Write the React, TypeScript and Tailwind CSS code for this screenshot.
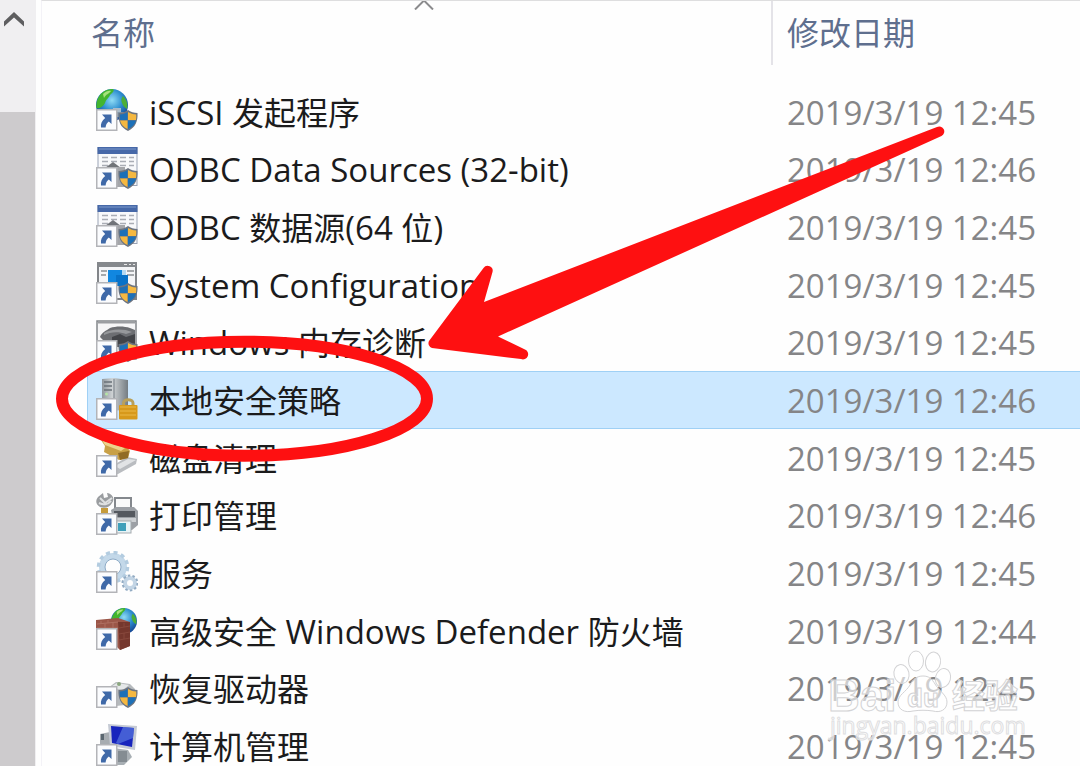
import type { ReactNode } from 'react'

function ShortcutArrow() {
  return (
    <g>
      <rect x="0.75" y="20.75" width="20" height="20.5" fill="#fbfcfe" stroke="#b3b4b8" strokeWidth="1.5" />
      <path d="M6 25.5H15.5V35L12.8 32.6C10.8 34.2 9.8 36 9.6 38.5H5C4.4 34.6 6 31.4 9.2 29Z" fill="#3f69a8" />
    </g>
  )
}

function Shield() {
  return (
    <g>
      <path d="M32 21C34.5 23 38 24 41.5 24C42 32 39.5 38.5 32 42C24.5 38.5 22 32 22.5 24C26 24 29.5 23 32 21Z" fill="#6d7480" />
      <path d="M31.5 23V31H24C23.7 29 23.7 27.5 23.8 25.5C27 25.3 29.5 24.5 31.5 23Z" fill="#1d70b7" />
      <path d="M32 23C34.5 24.5 37 25.3 40.2 25.5C40.3 27.5 40.3 29 40 31H32Z" fill="#f5b840" />
      <path d="M24 31.5H31.5V40C27.5 38 25 35.5 24 31.5Z" fill="#f5b840" />
      <path d="M32 31.5H40C39 35.5 36.5 38 32 40Z" fill="#1d70b7" />
    </g>
  )
}

function FileIcon({ children, shield }: { children: ReactNode; shield?: boolean }) {
  return (
    <svg viewBox="0 0 42 42" className="mb-[3px] h-[42px] w-[42px] shrink-0" aria-hidden="true">
      {children}
      {shield && <Shield />}
      <ShortcutArrow />
    </svg>
  )
}

function Globe({ cx, cy, r }: { cx: number; cy: number; r: number }) {
  return (
    <svg x={cx - r} y={cy - r} width={r * 2} height={r * 2} viewBox="0 0 32 32">
      <defs>
        <radialGradient id="ocean" cx="0.5" cy="0.35" r="0.65">
          <stop offset="0" stopColor="#8fdcf5" />
          <stop offset="0.5" stopColor="#2f8fd0" />
          <stop offset="1" stopColor="#12408f" />
        </radialGradient>
      </defs>
      <circle cx="16" cy="16" r="16" fill="url(#ocean)" />
      <path d="M4 6C7 2 12 0 17 0C19 2 16 4 14 6C13 9 10 10 9 14C7 18 3 20 0.5 19C0 14 1 10 4 6Z" fill="#43b52f" />
      <path d="M7 5C10 2 13 1.5 15 2C13 5 10 5 8 9Z" fill="#a6e27c" />
      <path d="M27 7C31 11 32 15 31 20C29 19 27 17 26 14C25 12 25 9 27 7Z" fill="#4cae38" />
    </svg>
  )
}

function IscsiIcon() {
  return (
    <FileIcon shield>
      <Globe cx={16} cy={16} r={16} />
      <path d="M17 19H25V27H17Z" fill="#a9bccb" />
      <path d="M15 23H28V28H15Z" fill="#8297aa" />
    </FileIcon>
  )
}

function OdbcIcon() {
  return (
    <FileIcon shield>
      <rect x="2" y="0.5" width="39" height="38" fill="#f8f9fb" stroke="#9aa3b5" />
      <rect x="1.5" y="0" width="40" height="7" fill="#4668a8" />
      <path d="M3 2H40" stroke="#7c99cb" />
      <path d="M6 10.5H12M15 10.5H21M24 10.5H30M33 10.5H38M6 14.5H12M15 14.5H21M24 14.5H30M33 14.5H38M6 18.5H12M24 18.5H30M33 18.5H38" stroke="#a9adb5" strokeWidth="1.5" />
      <path d="M9 21L17 15L25 21" fill="#717479" />
      <path d="M7 20H29V40H7Z" fill="#a4a6aa" />
    </FileIcon>
  )
}

function ConfigIcon() {
  return (
    <FileIcon shield>
      <rect x="2" y="1" width="38" height="36" fill="#f4f5f7" stroke="#828589" strokeWidth="2" />
      <rect x="1" y="0" width="40" height="5" fill="#85888c" />
      <path d="M28 2.5H31M33 2.5H35M37 2.5H39" stroke="#e8e8e8" />
      <path d="M5 9H11M5 13H10M31 9H38M31 13H38" stroke="#8b8e93" strokeWidth="1.5" />
      <path d="M12 8H26V20H12Z" fill="#1187e0" />
      <path d="M20 13H32V24H20Z" fill="#0872c8" />
      <path d="M26 8H30V13H26Z" fill="#b4d9f2" />
    </FileIcon>
  )
}

function MemoryIcon() {
  return (
    <FileIcon shield>
      <rect x="1" y="1" width="39" height="38" fill="#f6f6f7" stroke="#83868b" strokeWidth="1.5" />
      <path d="M2 2.5H39" stroke="#9b9da1" strokeWidth="2" />
      <path d="M4 17C6 12 10 11 14 8C20 6 28 6 34 8L39 10V22H9Z" fill="#6c6e72" />
      <path d="M8 13C14 9 27 8 36 12L30 14C22 11 14 12 8 15Z" fill="#96989b" />
      <path d="M16 17L24 14L30 17L39 14V27H16Z" fill="#424448" />
    </FileIcon>
  )
}

function PolicyIcon() {
  return (
    <FileIcon>
      <defs>
        <linearGradient id="tower">
          <stop offset="0" stopColor="#8f979d" />
          <stop offset="0.4" stopColor="#ced2d4" />
          <stop offset="1" stopColor="#747c82" />
        </linearGradient>
      </defs>
      <path d="M6 1L18 0L32 2V31L18 33L6 28Z" fill="url(#tower)" />
      <path d="M18 1V32" stroke="#777f86" />
      <path d="M8 4H16M8 8H16M8 12H16" stroke="#697178" strokeWidth="1.5" />
      <circle cx="10.5" cy="16" r="1.5" fill="#b5e4a6" />
      <path d="M27.5 29V25C27.5 20.5 37 20.5 37 25V29" fill="none" stroke="#b9a05a" strokeWidth="3" />
      <rect x="23" y="27" width="18.5" height="14.5" rx="1" fill="#d7991b" />
      <path d="M24 29H40M24 33H40M24 37H40" stroke="#e5ae3a" strokeWidth="1.5" />
    </FileIcon>
  )
}

function CleanupIcon() {
  return (
    <FileIcon>
      <path d="M16 31L31 22L41 24L40 29L22 39H16Z" fill="#b9bcc0" />
      <path d="M19 31L32 24L40 25L24 34Z" fill="#e1e3e5" />
      <path d="M3 2L15 8L31 12L34 16L32 23L23 25L8 17L9 11Z" fill="#c8a046" />
      <path d="M6 5L29 13L25 16L9 10Z" fill="#ecd38c" />
      <path d="M22 18L33 16L32 23L24 25Z" fill="#916c26" />
    </FileIcon>
  )
}

function PrintIcon() {
  return (
    <FileIcon>
      <rect x="19" y="5" width="16" height="14" fill="#fafafa" stroke="#84888d" strokeWidth="2" />
      <path d="M15 17L20 14H38L42 18V32L36 37H19Z" fill="#9ca0a5" />
      <path d="M18 18H39V24H18Z" fill="#55595f" />
      <path d="M18 25H40V29H18Z" fill="#cdd0d3" />
      <rect x="20" y="28" width="15" height="12" fill="#e8f4f7" stroke="#a5aaae" />
      <path d="M22 30H30V38H22Z" fill="#3f9fba" />
      <path d="M2 4L7 0L8 5L12 4L11 0C17 1 19 6 16 10C14 14 9 16 4 14C0 12 -1 8 2 4Z" fill="#9a9da0" />
      <path d="M4 5L9 10L16 5M3 10C7 12 12 12 15 8" fill="none" stroke="#dfe1e2" strokeWidth="2" />
      <path d="M5 15H12V22H5Z" fill="#c69c3c" />
    </FileIcon>
  )
}

function ServicesIcon() {
  return (
    <FileIcon>
      <circle cx="17" cy="16" r="11" fill="none" stroke="#c3d8e9" strokeWidth="6" />
      <circle cx="17" cy="16" r="14.5" fill="none" stroke="#b3cce0" strokeWidth="3.5" strokeDasharray="4 3.6" />
      <circle cx="17" cy="16" r="8" fill="none" stroke="#8eabc6" strokeWidth="1" />
      <circle cx="34" cy="32" r="5" fill="none" stroke="#c3d5e5" strokeWidth="4" />
      <circle cx="34" cy="32" r="7.5" fill="none" stroke="#92abc3" strokeWidth="2" strokeDasharray="2.5 2.2" />
    </FileIcon>
  )
}

function FirewallIcon() {
  return (
    <FileIcon>
      <Globe cx={28} cy={13} r={13} />
      <path d="M0 12L22 10L34 14V38L24 42L14 32L0 30Z" fill="#9b5648" />
      <path d="M22 14L34 14V38L24 42Z" fill="#75372d" />
      <path d="M1 16L22 14M5 13V16M12 12V15M1 20H22M9 16V20M17 15V20" stroke="#ae6f61" />
      <path d="M23 20L34 18M23 26L34 24M23 32L34 30M28 15V19M28 25V31" stroke="#87483c" />
    </FileIcon>
  )
}

function RecoveryIcon() {
  return (
    <FileIcon shield>
      <path d="M12 22L20 16L34 18L39 23L38 38L20 40Z" fill="#b6babd" />
      <path d="M13 22L21 17L33 19L27 24Z" fill="#e5e8e9" />
      <circle cx="23" cy="18" r="2" fill="#8ca780" />
    </FileIcon>
  )
}

function ComputerIcon() {
  return (
    <FileIcon>
      <path d="M4 10L14 8V24H4Z" fill="#a7acb1" />
      <path d="M5 10H8V16H5Z" fill="#5b6770" />
      <path d="M17 24L32 26L36 33L28 41H20Z" fill="#a8afb4" />
      <path d="M22 27H31V38H22Z" fill="#848c92" />
      <path d="M12 0L41 2L39 26L14 22Z" fill="#c5cad4" />
      <path d="M15 2L38 4L36 23L16 19Z" fill="#1724bd" />
      <path d="M27 3L38 4L37 14L22 20L20 19Z" fill="#5977e0" opacity="0.7" />
    </FileIcon>
  )
}

const files = [
  { name: 'iSCSI 发起程序', date: '2019/3/19 12:45', icon: <IscsiIcon /> },
  { name: 'ODBC Data Sources (32-bit)', date: '2019/3/19 12:46', icon: <OdbcIcon /> },
  { name: 'ODBC 数据源(64 位)', date: '2019/3/19 12:45', icon: <OdbcIcon /> },
  { name: 'System Configuration', date: '2019/3/19 12:45', icon: <ConfigIcon /> },
  { name: 'Windows 内存诊断', date: '2019/3/19 12:45', icon: <MemoryIcon /> },
  { name: '本地安全策略', date: '2019/3/19 12:46', icon: <PolicyIcon />, selected: true },
  { name: '磁盘清理', date: '2019/3/19 12:45', icon: <CleanupIcon /> },
  { name: '打印管理', date: '2019/3/19 12:46', icon: <PrintIcon /> },
  { name: '服务', date: '2019/3/19 12:45', icon: <ServicesIcon /> },
  { name: '高级安全 Windows Defender 防火墙', date: '2019/3/19 12:44', icon: <FirewallIcon /> },
  { name: '恢复驱动器', date: '2019/3/19 12:45', icon: <RecoveryIcon /> },
  { name: '计算机管理', date: '2019/3/19 12:45', icon: <ComputerIcon /> },
]

// Latin text is set a little larger than the Chinese glyphs
function FileName({ name }: { name: string }) {
  return (
    <span className="whitespace-pre pt-0.5 text-[33px] leading-10">
      {name.split(/([\u4e00-\u9fff]+)/).map((part, index) =>
        index % 2 ? <span key={index} className="text-[32px]">{part}</span> : part
      )}
    </span>
  )
}

function ScrollBar() {
  return (
    <div className="flex w-9 shrink-0 flex-col bg-[#f0eff1]">
      <button type="button" aria-label="Scroll up" className="flex h-28 items-start pl-1 pt-3">
        <svg viewBox="0 0 20 15" className="h-[15px] w-5">
          <path d="M0 9.5L10 0L20 9.5V14.5L10 5.5L0 14.5Z" fill="#5e5e60" />
        </svg>
      </button>
      <div className="mr-px flex-1 bg-[#cdcbcd]" />
    </div>
  )
}

function FileTable() {
  return (
    <table className="w-full table-fixed border-collapse text-left">
      <thead>
        <tr className="text-[32px] text-[#5f6f8e]">
          <th className="p-0 pb-[18px] font-normal">
            <button type="button" className="relative flex h-16 w-full items-center pl-[14px]">
              名称
              <svg viewBox="0 0 20 9" className="absolute left-1/2 top-0 h-[9px] w-5 -translate-x-1/2">
                <path d="M1 8.5L10 -0.5L19 8.5" fill="none" stroke="#8b8b8d" strokeWidth="2" />
              </svg>
            </button>
          </th>
          <th className="w-[309px] p-0 pb-[18px] font-normal">
            <button type="button" className="flex h-16 w-full items-center border-l-2 border-[#e4e3e8] pl-[14px]">
              修改日期
            </button>
          </th>
        </tr>
      </thead>
      <tbody>
        {files.map((file) => (
          <tr key={file.name} className="group" aria-selected={file.selected}>
            <td className="p-0 pl-[10px]">
              <div className="flex h-[58px] items-center gap-[11px] border border-r-0 border-transparent pl-2 text-[#1b1b1c] group-nth-[3n+1]:h-[57px] group-aria-selected:border-[#9fd0f5] group-aria-selected:bg-[#cce8ff]">
                {file.icon}
                <FileName name={file.name} />
              </div>
            </td>
            <td className="p-0">
              <div className="flex h-[58px] items-center border-y border-transparent pl-4 text-[33px] text-[#858587] group-nth-[3n+1]:h-[57px] group-aria-selected:border-[#9fd0f5] group-aria-selected:bg-[#cce8ff]">
                <span className="whitespace-nowrap pt-0.5 leading-10">{file.date}</span>
              </div>
            </td>
          </tr>
        ))}
      </tbody>
    </table>
  )
}

// Red marks drawn over the list
function Annotation() {
  return (
    <svg viewBox="0 0 1080 766" className="pointer-events-none absolute left-0 top-0 h-[766px] w-[1080px]" aria-hidden="true">
      <ellipse cx="244.5" cy="398.7" rx="182.5" ry="57" fill="none" stroke="#fe1011" strokeWidth="12" />
      <path
        d="M937 127L484 302L492.5 272A5 5 0 0 0 483.5 268L429 341A5 5 0 0 0 432 348L521 359A5 5 0 0 0 525 349.5L498 336.5L941.5 136A5 5 0 0 0 937 127Z"
        fill="#fe1011"
      />
    </svg>
  )
}

function Watermark() {
  return (
    <svg viewBox="0 0 200 100" className="pointer-events-none absolute bottom-[16px] right-[55px] h-[100px] w-[200px]">
      <g fill="#fff" fillOpacity="0.6" stroke="#d3d3d5" strokeWidth="1">
        <ellipse cx="76.5" cy="24" rx="7.5" ry="9.5" transform="rotate(-12 76.5 24)" />
        <ellipse cx="91" cy="11" rx="7.5" ry="10" />
        <ellipse cx="108" cy="12" rx="7.5" ry="10" transform="rotate(10 108 12)" />
        <ellipse cx="118" cy="28" rx="7.5" ry="9.5" transform="rotate(15 118 28)" />
        <path d="M98 26C104 26 107 29 110 34C114 41 122 45 122 52C122 60 115 63 108 61C101 60 95 60 88 61C80 63 73 60 73 52C73 45 81 42 85 35C88 29 92 26 98 26Z" />
        <text x="3" y="61" className="font-['Liberation_Sans',sans-serif] text-[44px] font-bold">Bai</text>
        <text x="82" y="57" fillOpacity="0.3" className="font-['Liberation_Sans',sans-serif] text-[26px] font-bold">du</text>
        <text x="127" y="58" className="font-['Noto_Sans_CJK_SC',sans-serif] text-[33px] font-bold">经验</text>
        <text x="5" y="84" stroke="#dfdfe1" className="font-['Open_Sans',sans-serif] text-[23px]">jingyan.baidu.com</text>
      </g>
    </svg>
  )
}

export default function App() {
  return (
    <div className="relative flex h-screen overflow-hidden bg-[#fefefe] font-['Open_Sans','Noto_Sans_CJK_SC',sans-serif]">
      <ScrollBar />
      <main className="ml-[5px] min-w-0 flex-1 border-l border-t border-l-[#f3f2f7] border-t-[#dededf] pl-[35px]">
        <FileTable />
      </main>
      <Annotation />
      <Watermark />
    </div>
  )
}
